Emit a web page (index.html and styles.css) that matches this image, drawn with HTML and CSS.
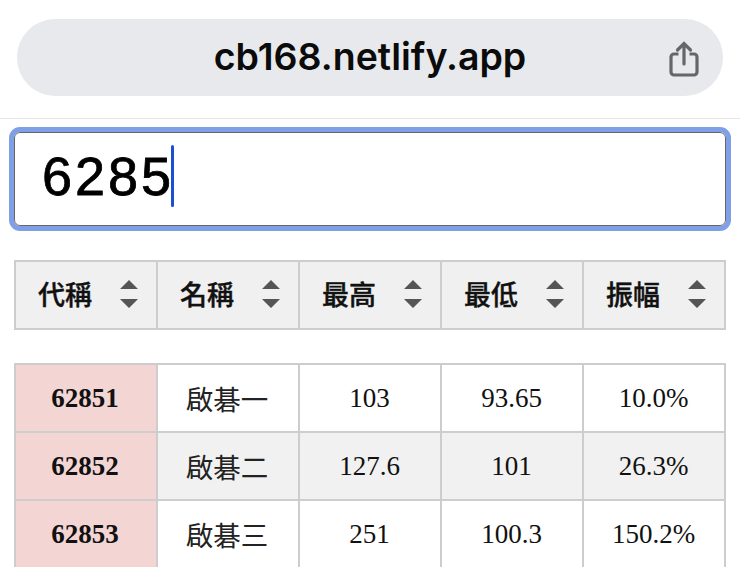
FILE: index.html
```html
<!DOCTYPE html>
<html lang="zh-Hant">
<head>
<meta charset="utf-8">
<title>cb168.netlify.app</title>
<link rel="stylesheet" href="styles.css">
</head>
<body>
<header class="browser">
  <div class="address">
    <span class="url">cb168.netlify.app</span>
    <svg class="share" width="30" height="36" viewBox="0 0 30 36" fill="none" stroke="#63676a" stroke-width="3.2">
      <path d="M9.5 13H5a3 3 0 0 0-3 3v15a3 3 0 0 0 3 3h20a3 3 0 0 0 3-3V16a3 3 0 0 0-3-3h-4.500"/>
      <path d="M15 23V3M8.500 9 15 2.500 21.500 9" stroke-linecap="round"/>
    </svg>
  </div>
</header>
<main class="page">
  <div class="search"><span class="search-text">6285</span><span class="caret"></span></div>
  <table class="grid head">
    <tr>
      <th><div class="th-in">代稱<svg class="sort" width="18" height="28" viewBox="0 0 18 28"><path d="M9 0l9 9H0zM0 19h18l-9 9z"/></svg></div></th>
      <th><div class="th-in">名稱<svg class="sort" width="18" height="28" viewBox="0 0 18 28"><path d="M9 0l9 9H0zM0 19h18l-9 9z"/></svg></div></th>
      <th><div class="th-in">最高<svg class="sort" width="18" height="28" viewBox="0 0 18 28"><path d="M9 0l9 9H0zM0 19h18l-9 9z"/></svg></div></th>
      <th><div class="th-in">最低<svg class="sort" width="18" height="28" viewBox="0 0 18 28"><path d="M9 0l9 9H0zM0 19h18l-9 9z"/></svg></div></th>
      <th><div class="th-in">振幅<svg class="sort" width="18" height="28" viewBox="0 0 18 28"><path d="M9 0l9 9H0zM0 19h18l-9 9z"/></svg></div></th>
    </tr>
  </table>
  <table class="grid body">
    <tr><td class="code">62851</td><td class="name">啟碁一</td><td>103</td><td>93.65</td><td>10.0%</td></tr>
    <tr class="alt"><td class="code">62852</td><td class="name">啟碁二</td><td>127.6</td><td>101</td><td>26.3%</td></tr>
    <tr><td class="code">62853</td><td class="name">啟碁三</td><td>251</td><td>100.3</td><td>150.2%</td></tr>
  </table>
</main>
</body>
</html>
```
FILE: styles.css
```css
html, body { margin: 0; padding: 0; background: #fff; overflow: hidden; height: 567px; }
.browser { box-sizing: border-box; height: 119px; padding: 19px 17px 0; border-bottom: 1px solid #e6e6e6; }
.address { position: relative; height: 77px; border-radius: 38px; background: #e7e9ec; display: flex; align-items: center; justify-content: center; }
.url { font-family: "Inter", "Liberation Sans", sans-serif; font-weight: 600; font-size: 37.500px; color: #0b0b0b; position: relative; top: -1px; }
.share { position: absolute; right: 24px; top: 22px; }
.page { padding: 13px 14px 0; }
.search { box-sizing: border-box; height: 94px; border: 1px solid #666; border-radius: 6px; outline: 5px solid #7f9fe6; padding-left: 27px; display: flex; align-items: center; background: #fff; }
.search-text { font-family: "Liberation Sans", sans-serif; font-size: 54px; letter-spacing: 3px; color: #000; margin-right: -3px; -webkit-text-stroke: 0.8px #000; position: relative; top: -3px; }
.caret { width: 3px; height: 62px; background: #1a4fd6; border-radius: 2px; position: relative; top: -3px; }
.grid { width: 712px; table-layout: fixed; border-collapse: collapse; }
.grid th, .grid td { border: 2px solid #cdcdcd; padding: 0; }
.head { margin-top: 34px; }
.head th { height: 66px; background: #f0f0f0; font-family: "Noto Sans CJK TC", sans-serif; font-weight: 500; font-size: 27px; color: #111; -webkit-text-stroke: 0.4px #111; }
.th-in { display: flex; align-items: center; justify-content: space-between; padding: 0 18px 3px 22px; }
.sort { fill: #555; }
.body { margin-top: 33px; }
.body td { box-sizing: border-box; height: 68px; padding-right: 1px; text-align: center; font-family: "Liberation Serif", serif; font-size: 27px; color: #111; }
.body .code { background: #f3d6d4; font-weight: 700; padding-right: 2px; }
.body .name { font-family: "Noto Sans CJK TC", sans-serif; font-weight: 400; font-size: 27.500px; color: #222; padding-right: 2px; }
.alt td { background: #f1f1f1; }
```
